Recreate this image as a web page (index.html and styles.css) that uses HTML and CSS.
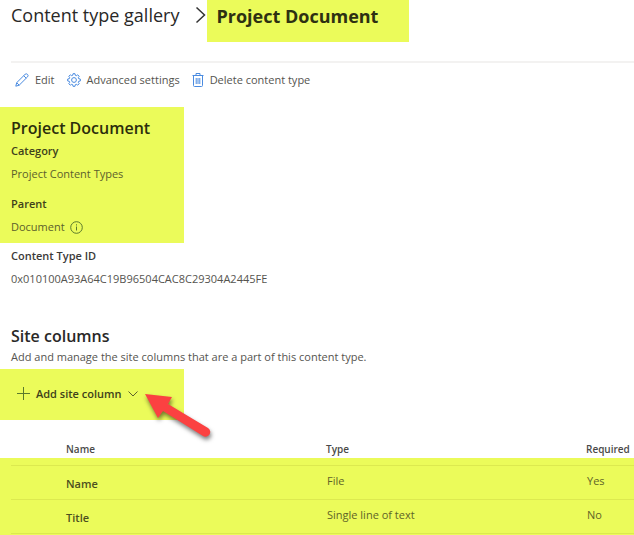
FILE: index.html
```html
<!DOCTYPE html>
<html lang="en">
<head>
    <meta charset="UTF-8">
    <meta name="viewport" content="width=device-width, initial-scale=1.0">
    <title>Project Document</title>
    <link rel="stylesheet" href="styles.css">
</head>
<body>
    <header class="breadcrumb">
        <a href="#" class="crumb">Content type gallery</a>
        <svg class="crumb-arrow" width="12" height="18" viewBox="0 0 12 18"><path d="M1.5 1.5 9.5 9l-8 7.5"/></svg>
        <h1 class="crumb-current">Project Document</h1>
    </header>

    <div class="toolbar">
        <button type="button" class="command">
            <svg class="icon" width="14" height="14" viewBox="0 0 14 14"><path d="M.8 13.2 1.7 9.7 10 1.4a1.7 1.7 0 0 1 2.5 2.5L4.2 12.2zM8.7 2.7l2.5 2.5M1.7 9.7l2.5 2.5"/></svg>
            Edit
        </button>
        <button type="button" class="command">
            <svg class="icon" width="14" height="14" viewBox="0 0 14 14"><path d="M6 .7h2l.3 1.6 1 .4 1.4-.9 1.5 1.5-.9 1.4.4 1 1.6.3v2l-1.6.3-.4 1 .9 1.4-1.5 1.5-1.4-.9-1 .4L8 13.3H6l-.3-1.6-1-.4-1.4.9-1.5-1.5.9-1.4-.4-1L.7 8V6l1.6-.3.4-1-.9-1.4 1.5-1.5 1.4.9 1-.4z"/><circle cx="7" cy="7" r="2.4"/></svg>
            Advanced settings
        </button>
        <button type="button" class="command">
            <svg class="icon" width="12" height="14" viewBox="0 0 12 14"><path d="M.5 2.5h11M4 2.5v-2h4v2M1.5 2.5v10q0 1 1 1h7q1 0 1-1v-10M4.2 5v6M6 5v6M7.8 5v6"/></svg>
            Delete content type
        </button>
    </div>

    <section class="details">
        <h2>Project Document</h2>
        <dl>
            <dt>Category</dt>
            <dd>Project Content Types</dd>
            <dt>Parent</dt>
            <dd>
                Document
                <svg class="info" width="13" height="13" viewBox="0 0 13 13"><circle cx="6.5" cy="6.5" r="5.8"/><path d="M6.5 5.5v4M6.5 3.3v1.2"/></svg>
            </dd>
        </dl>
    </section>

    <dl class="type-id">
        <dt>Content Type ID</dt>
        <dd>0x010100A93A64C19B96504CAC8C29304A2445FE</dd>
    </dl>

    <section class="columns">
        <h2>Site columns</h2>
        <p>Add and manage the site columns that are a part of this content type.</p>
        <div class="add-bar">
            <button type="button" class="add-button">
                <svg class="plus" width="13" height="13" viewBox="0 0 13 13"><path d="M6.5 0v13M0 6.5h13"/></svg>
                Add site column
                <svg class="chevron" width="10" height="6" viewBox="0 0 10 6"><path d="M.5.5 5 5 9.5.5"/></svg>
            </button>
            <svg class="pointer" width="76" height="56" viewBox="0 0 76 56">
                <path d="M4 4 31 7 27 14 67 38a4.5 4.5 0 0 1-5 8L22 21 17 28z"/>
            </svg>
        </div>
        <div class="table-area">
            <table>
                <thead>
                    <tr>
                        <th class="name">Name</th>
                        <th class="type">Type</th>
                        <th class="required">Required</th>
                    </tr>
                </thead>
                <tbody>
                    <tr>
                        <th scope="row" class="name">Name</th>
                        <td>File</td>
                        <td>Yes</td>
                    </tr>
                    <tr>
                        <th scope="row" class="name">Title</th>
                        <td>Single line of text</td>
                        <td>No</td>
                    </tr>
                </tbody>
            </table>
        </div>
    </section>
</body>
</html>
```
FILE: styles.css
```css
* {
    box-sizing: border-box;
}
body {
    margin: 0;
    font-family: 'Open Sans', 'Noto Sans', sans-serif;
    font-size: 11px;
    line-height: 16px;
    color: #55544f;
    background: #fff;
}
h1, h2, p, dl, dd {
    margin: 0;
}
svg {
    fill: none;
    flex: none;
}
button {
    display: flex;
    align-items: center;
    padding: 0;
    border: 0;
    background: none;
    font: inherit;
    color: inherit;
    cursor: pointer;
}
.breadcrumb {
    display: flex;
    align-items: flex-start;
    padding-left: 11px;
    line-height: 32px;
}
.crumb {
    font-size: 18px;
    line-height: 30px;
    color: #292827;
    text-decoration: none;
}
.crumb-arrow {
    margin: 6px 0 0 16px;
    stroke: #333;
    stroke-width: 1.5;
}
.crumb-current {
    height: 42px;
    padding: 0 31px 0 9px;
    font-size: 18px;
    font-weight: 700;
    color: #2e3012;
    background: #ebfb5a;
}
.toolbar {
    display: flex;
    gap: 12px;
    margin: 19px 0 0 11px;
    padding: 9px 4px 11px;
    border-top: 2px solid #f3f2f1;
}
.command {
    gap: 6px;
}
.icon {
    stroke: #4a8be0;
    stroke-width: 1;
}
.details {
    width: 29%;
    min-width: 184px;
    margin-top: 8px;
    padding: 9px 11px 8px;
    background: #ebfb5a;
    color: #5c602c;
}
h2 {
    font-size: 16px;
    line-height: 24px;
    font-weight: 600;
    color: #292827;
}
.details h2 {
    color: #2b2e0c;
}
dt {
    margin-top: 14px;
    font-weight: 600;
    color: #3b3a39;
}
.details dt {
    color: #3e411a;
}
dt:first-child {
    margin-top: 3px;
}
dd {
    display: flex;
    align-items: center;
    gap: 5px;
    margin-top: 7px;
}
.info {
    stroke: #5b7a2c;
}
.type-id {
    padding: 2px 11px 0;
}
.columns {
    margin-top: 37px;
}
.columns h2, .columns p {
    padding-left: 11px;
}
.columns p {
    padding-top: 1px;
}
.add-bar {
    position: relative;
    display: flex;
    align-items: center;
    width: 29%;
    min-width: 184px;
    height: 51px;
    margin-top: 4px;
    padding: 0 17px 2px;
    background: #ebfb5a;
}
.add-button {
    gap: 6px;
    font-weight: 600;
    color: #3e411a;
}
.plus {
    stroke: #5b7a2c;
}
.chevron {
    stroke: #5d612c;
}
.pointer {
    position: absolute;
    top: 21px;
    left: 141px;
    fill: #fb4141;
    filter: drop-shadow(1px 3px 2px rgba(0, 0, 0, 0.5));
}
.table-area {
    margin-top: 21px;
    padding: 0 0 1px 11px;
    background: linear-gradient(#fff 17px, #ebfb5a 17px);
}
table {
    width: 100%;
    table-layout: fixed;
    border-collapse: collapse;
    color: #5f6428;
}
th, td {
    height: 34px;
    padding: 0 0 4px 1px;
    border-bottom: 1px solid #dce94f;
    text-align: left;
}
th {
    font-weight: 600;
}
thead th {
    height: 24px;
    padding: 0 0 8px;
    font-size: 10px;
    color: #4a4948;
}
tbody th {
    padding: 2px 0 0;
    color: #4b4f20;
}
th.name {
    padding-left: 55px;
}
.type {
    width: 260px;
}
.required {
    width: 48px;
}
```
